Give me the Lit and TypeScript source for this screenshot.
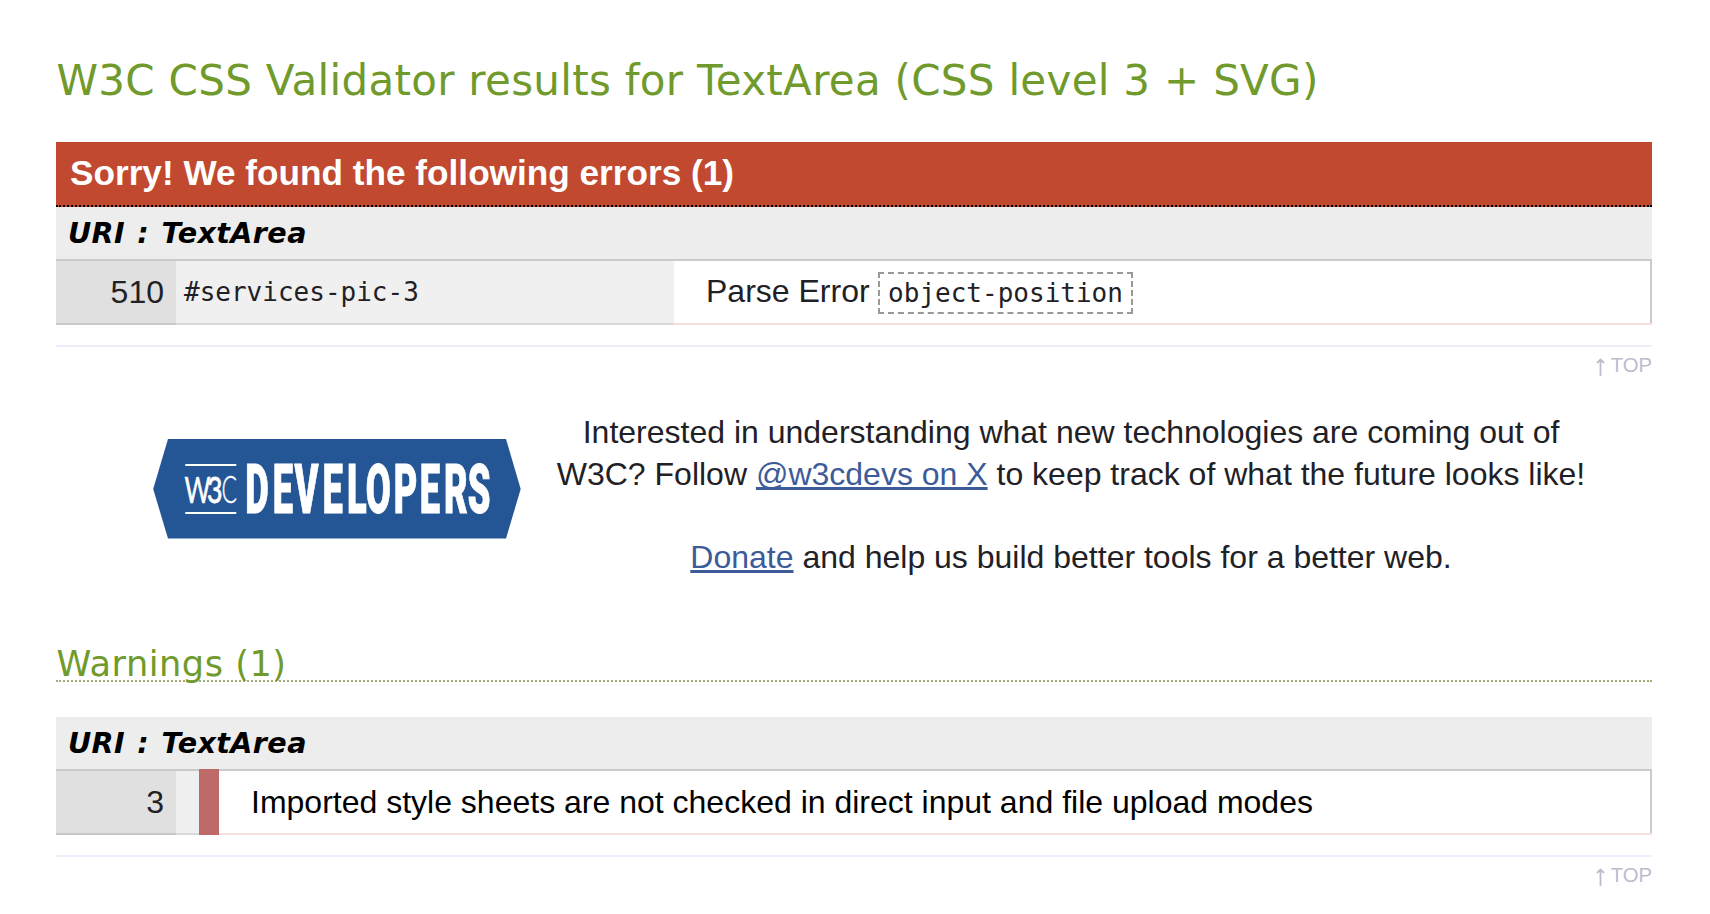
import { LitElement, html, css } from "lit";

const LOGO_SCALE = 0.53;
const LETTER_CENTERS = [257, 283, 306.5, 332.6, 356.8, 378.2, 405.6, 430, 455.8, 479.2]
  .map((x) => (x / LOGO_SCALE).toFixed(2))
  .join(" ");

class AppRoot extends LitElement {
  static styles = css`
    :host {
      display: block;
      box-sizing: border-box;
      height: 914px;
      padding: 50px 58px 0 56px;
      overflow: hidden;
      background: #fff;
      color: #1f2126;
      font: 32px/41.6px "Liberation Sans", Arial, sans-serif;
    }
    h1, h2, h3, h4, p { margin: 0; }
    h1 {
      height: 92px;
      padding-left: 0.5px;
      font: 42px/61px "DejaVu Sans", Verdana, sans-serif;
      letter-spacing: 0.29px;
      color: #709a2b;
      white-space: nowrap;
    }
    h2 {
      height: 63px;
      padding-left: 14px;
      border-bottom: 2px dotted #000;
      background: #c1492f;
      color: #fff;
      font-size: 35.2px;
      line-height: 61px;
    }
    h3 {
      height: 33px;
      border-bottom: 2px dotted #a7ab78;
      margin-bottom: 35px;
      padding-left: 0.5px;
      font: 35.2px/33px "DejaVu Sans", Verdana, sans-serif;
      letter-spacing: 0.5px;
      color: #709a2b;
    }
    h4 {
      height: 52px;
      padding-left: 12px;
      background: #ededed;
      color: #000;
      font: italic bold 28.6px/53px "DejaVu Sans", Verdana, sans-serif;
      letter-spacing: 0.4px;
      word-spacing: 1.9px;
    }
    .row {
      display: flex;
      height: 66px;
      box-sizing: border-box;
      line-height: 62px;
      background: linear-gradient(#cacaca, #cacaca) top / 100% 2px no-repeat;
    }
    .row > * { box-sizing: border-box; height: 64px; margin-top: 2px; }
    .num {
      width: 120px;
      padding-right: 12px;
      text-align: right;
      background: #e0e0e0;
      border-bottom: 2px solid #c8c8c8;
    }
    .ctx {
      width: 498px;
      padding-left: 8px;
      background: #f0f0f0;
      border-bottom: 2px solid #dadada;
      font: 26px/62px "DejaVu Sans Mono", Menlo, monospace;
    }
    .ctx.narrow { width: 23px; padding: 0; }
    .row > .flag { width: 20px; height: 66px; margin-top: 0; background: #be6a68; }
    .msg {
      flex: 1;
      display: flex;
      padding-left: 32px;
      background: linear-gradient(#cacaca, #cacaca) right top / 2px 62px no-repeat;
      border-bottom: 2px solid #f5dede;
      line-height: 60px;
    }
    .msg.warn { color: #000; line-height: 62px; }
    .code {
      box-sizing: border-box;
      height: 42px;
      width: 255px;
      margin: 11px 0 0 8.5px;
      padding-left: 8px;
      border: 2px dashed #999;
      font: 26px/38px "DejaVu Sans Mono", Menlo, monospace;
    }
    .top {
      display: flex;
      justify-content: flex-end;
      gap: 6px;
      margin-top: 20px;
      border-top: 2px solid #ededfd;
      height: 65px;
      color: #bdbccd;
      font-size: 20.3px;
      line-height: 36px;
    }
    .arrow { width: 9px; height: 18px; margin-top: 11px; }
    .promo { display: flex; height: 235px; }
    .logo { width: 368px; height: 100px; margin: 27px 34px 0 97px; flex: none; }
    .text { width: 1032px; text-align: center; }
    .text p + p { margin-top: 41.6px; }
    a {
      color: #3d5b98;
      text-decoration: underline;
      text-decoration-thickness: 3px;
      text-underline-offset: 2px;
      text-decoration-skip-ink: none;
    }
  `;

  top() {
    return html`<div class="top">
      <svg class="arrow" viewBox="0 0 9 18" fill="none" stroke="currentColor" stroke-width="1.8">
        <path d="M4.5 18V1.5M1 5L4.5 1.5L8 5" />
      </svg>
      <span>TOP</span>
    </div>`;
  }

  render() {
    return html`
      <h1>W3C CSS Validator results for TextArea (CSS level 3 + SVG)</h1>
      <h2>Sorry! We found the following errors (1)</h2>
      <h4>URI : TextArea</h4>
      <div class="row">
        <div class="num">510</div>
        <div class="ctx">#services-pic-3</div>
        <div class="msg"><span>Parse Error</span><span class="code">object-position</span></div>
      </div>
      ${this.top()}
      <div class="promo">
        <svg class="logo" viewBox="153 439 368 100">
          <polygon points="168,439 506,439 520.7,489 506,538.6 168,538.6 153.2,489" fill="#245696" />
          <path d="M185.3 465h51M185.3 513h51" stroke="#fff" stroke-width="2" />
          <g fill="#fff" font-family="Lato" font-size="37">
            <text x="184.5" y="502.7" textLength="26" lengthAdjust="spacingAndGlyphs" stroke="#fff" stroke-width=".5">W</text>
            <text x="207" y="502.7" textLength="15.5" lengthAdjust="spacingAndGlyphs" stroke="#fff" stroke-width=".8">3</text>
            <text x="221.5" y="502.7" font-weight="300" textLength="15.5" lengthAdjust="spacingAndGlyphs" stroke="#fff" stroke-width=".4">C</text>
          </g>
          <text x=${LETTER_CENTERS} y="0" transform="translate(0 513.3) scale(${LOGO_SCALE} 1)" text-anchor="middle"
            font-family="Roboto" font-weight="900" font-size="68.5" fill="#fff" stroke="#fff" stroke-width="1">DEVELOPERS</text>
        </svg>
        <div class="text">
          <p>Interested in understanding what new technologies are coming out of W3C? Follow <a>@w3cdevs on X</a> to keep track of what the future looks like!</p>
          <p><a>Donate</a> and help us build better tools for a better web.</p>
        </div>
      </div>
      <h3>Warnings (1)</h3>
      <h4>URI : TextArea</h4>
      <div class="row">
        <div class="num">3</div>
        <div class="ctx narrow"></div>
        <div class="flag"></div>
        <div class="msg warn">Imported style sheets are not checked in direct input and file upload modes</div>
      </div>
      ${this.top()}
    `;
  }
}
customElements.define("app-root", AppRoot);
